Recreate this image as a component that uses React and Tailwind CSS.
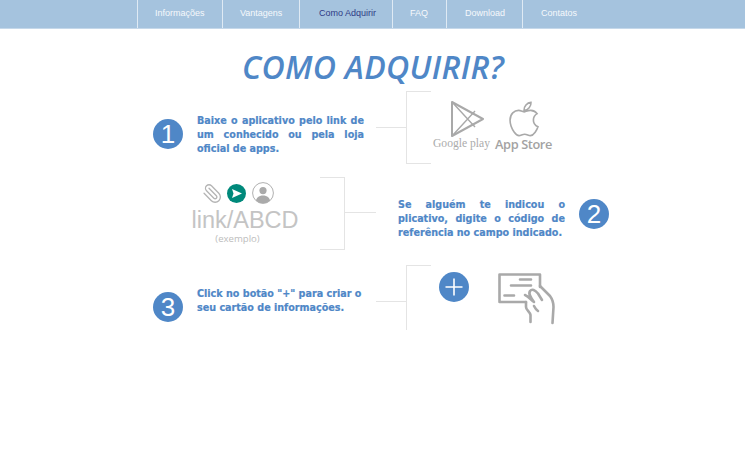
import React from "react";
import { FaApple } from "react-icons/fa";
import { Paperclip } from "lucide-react";

const items = [
  ["Informações", "w-[85px] pl-[17px] border-r", "text-[#f6f9fc]"],
  ["Vantagens", "w-[77px] pl-[17px] border-r", "text-[#f6f9fc]"],
  ["Como Adquirir", "w-[93px] pl-[19px] border-r", "text-[#2f3a85]"],
  ["FAQ", "w-[54px] pl-[17px] border-r", "text-[#f6f9fc]"],
  ["Download", "w-[76px] pl-[18px] border-r", "text-[#f6f9fc]"],
  ["Contatos", "w-[72px] pl-[18px]", "text-[#f6f9fc]"],
];

const Num = ({ n }) => (
  <div className="flex h-[30px] w-[30px] shrink-0 items-center justify-center rounded-full bg-[#4f87c7] font-['Liberation_Sans',sans-serif] text-[26px] leading-none text-white">
    {n}
  </div>
);

const Copy = ({ children, className = "" }) => (
  <p
    className={`w-[167px] shrink-0 font-['DejaVu_Sans',sans-serif] text-[9.6px] font-bold leading-[14px] text-[#4f87c7] [-webkit-text-stroke:0.2px_#4f87c7] ${className}`}
  >
    {children}
  </p>
);

const GooglePlay = () => (
  <svg width="35" height="38" viewBox="0 0 35 38" fill="none" stroke="#a9a9a9" strokeWidth="2" strokeLinejoin="round">
    <path d="M2 2 L33 19 L2 36 Z" />
    <path d="M2 2 L25 27 M2 36 L25 11" strokeWidth="1.4" />
  </svg>
);

const Send = () => (
  <svg width="19" height="19" viewBox="0 0 19 19" className="shrink-0">
    <circle cx="9.5" cy="9.5" r="9.5" fill="#00897b" />
    <path d="M5 5 L15 9.5 L5 14 L6.5 9.5 Z" fill="#fff" />
  </svg>
);

const Person = () => (
  <svg width="22" height="22" viewBox="0 0 22 22" className="shrink-0">
    <defs>
      <clipPath id="pc"><circle cx="11" cy="11" r="10.3" /></clipPath>
    </defs>
    <circle cx="11" cy="11" r="10.4" fill="#fff" stroke="#b0b0b0" strokeWidth="1" />
    <g clipPath="url(#pc)" fill="#aaaaaa">
      <circle cx="11" cy="8.6" r="3.6" />
      <path d="M3.5 22 C3.5 15.5 7 13.6 11 13.6 C15 13.6 18.5 15.5 18.5 22 Z" />
    </g>
  </svg>
);

const CardHand = () => (
  <svg width="58" height="52" viewBox="0 0 58 52" fill="none" stroke="#a9a9a9" strokeWidth="2.6" strokeLinecap="round" strokeLinejoin="round">
    <path d="M42 14 V1.5 H1.5 V29 H28" />
    <path d="M22 6.5 H33 M13 12.5 H33 M6.5 22.5 H16" />
    <path d="M27 22 C31 23.5 33 27 36 29 C33 25 30 21 32 18 C34 15.5 37 17 40 20.5 L44 27" />
    <path d="M42 13 L52 23 C55 27 55.5 30 55.5 34 L54.5 50" />
    <path d="M28 29 V34 C28 37 32 39 32.5 42 V49" />
    <path d="M36 33 C37.5 36 38.5 37 40 38" />
  </svg>
);

const Plus = () => (
  <svg width="30" height="30" viewBox="0 0 30 30" className="shrink-0">
    <circle cx="15" cy="15" r="15" fill="#4f87c7" />
    <path d="M15 6.5 V23.5 M6.5 15 H23.5" stroke="#fff" strokeWidth="1.6" />
  </svg>
);

export default function App() {
  return (
    <div className="min-h-[455px] bg-white font-['Liberation_Sans',sans-serif]">
      <nav className="flex h-[29px] border-b border-[#c5d8ea] bg-[#a5c3de] pl-[137px]">
        <div className="flex border-l border-[#dfeaf4]">
          {items.map(([t, w, c]) => (
            <a key={t} className={`flex ${w} items-center border-[#dfeaf4] pb-[1px] text-[9px] whitespace-nowrap ${c}`}>
              {t}
            </a>
          ))}
        </div>
      </nav>

      <h1 className="mt-[19px] h-[43px] pl-[1px] text-center font-['Open_Sans',sans-serif] text-[32px] leading-[38px] font-semibold tracking-[0.3px] text-[#4f87c7] italic">
        COMO ADQUIRIR?
      </h1>

      <div className="ml-[153px] w-[456px]">
        <section className="flex h-[73px]">
          <div className="flex items-center gap-[14px] pt-[12px]">
            <Num n="1" />
            <Copy className="mt-[2px] text-justify [text-align-last:left]">Baixe o aplicativo pelo link de um conhecido ou pela loja oficial de apps.</Copy>
          </div>
          <div className="ml-[12px] mt-[36px] h-px w-[30px] bg-[#e4e4e4]" />
          <div className="h-full w-[25px] border-y border-l border-[#e4e4e4]" />
          <div className="-ml-[22px] flex gap-[5px] pt-[9px] pl-[24px]">
            <div className="flex w-[57px] flex-col items-center">
              <div className="ml-[11px]"><GooglePlay /></div>
              <span className="mt-[-1px] font-['Liberation_Serif',serif] text-[11.6px] leading-[14px] whitespace-nowrap text-[#ababab]">Google play</span>
            </div>
            <div className="flex w-[57px] flex-col items-center">
              <FaApple size={38} fill="none" stroke="#a9a9a9" strokeWidth="22" style={{ fill: "none" }} />
              <span className="mt-[-1px] font-['Open_Sans',sans-serif] text-[12.8px] leading-[14px] font-semibold tracking-[-0.4px] whitespace-nowrap text-[#a3a3a3]">App Store</span>
            </div>
          </div>
        </section>

        <section className="mt-[13px] flex h-[73px]">
          <div className="flex w-[167px] shrink-0 flex-col items-center pt-[5px] pl-[17px]">
            <div className="mr-[15px] flex items-center gap-[4px]">
              <Paperclip size={21} strokeWidth={1.5} color="#b4b4b4" className="-scale-x-100" />
              <Send />
              <div className="ml-[2px]"><Person /></div>
            </div>
            <span className="mt-[2px] text-[23.5px] leading-[28px] text-[#c4c4c4]">link/ABCD</span>
            <span className="mr-[15px] mt-[-2px] font-['Open_Sans',sans-serif] text-[9.6px] leading-[13px] text-[#bdbdbd]">(exemplo)</span>
          </div>
          <div className="h-full w-[25px] border-y border-r border-[#e4e4e4]" />
          <div className="mt-[35px] h-px w-[32px] bg-[#e4e4e4]" />
          <div className="ml-[22px] flex items-center gap-[14px]">
            <Copy className="mt-[10px] text-justify [text-align-last:left]">Se alguém te indicou o plicativo, digite o código de referência no campo indicado.</Copy>
            <Num n="2" />
          </div>
        </section>

        <section className="mt-[15px] flex h-[65px]">
          <div className="flex items-center gap-[14px] pt-[19px]">
            <Num n="3" />
            <Copy className="mt-[-12px]">Click no botão "+" para criar o seu cartão de informações.</Copy>
          </div>
          <div className="ml-[12px] mt-[36px] h-px w-[30px] bg-[#e4e4e4]" />
          <div className="h-full w-[25px] border-t border-l border-[#e4e4e4]" />
          <div className="-ml-[22px] flex items-start gap-[29px] pt-[7px] pl-[30px]">
            <Plus />
            <div className="pt-[1px]"><CardHand /></div>
          </div>
        </section>
      </div>
    </div>
  );
}
